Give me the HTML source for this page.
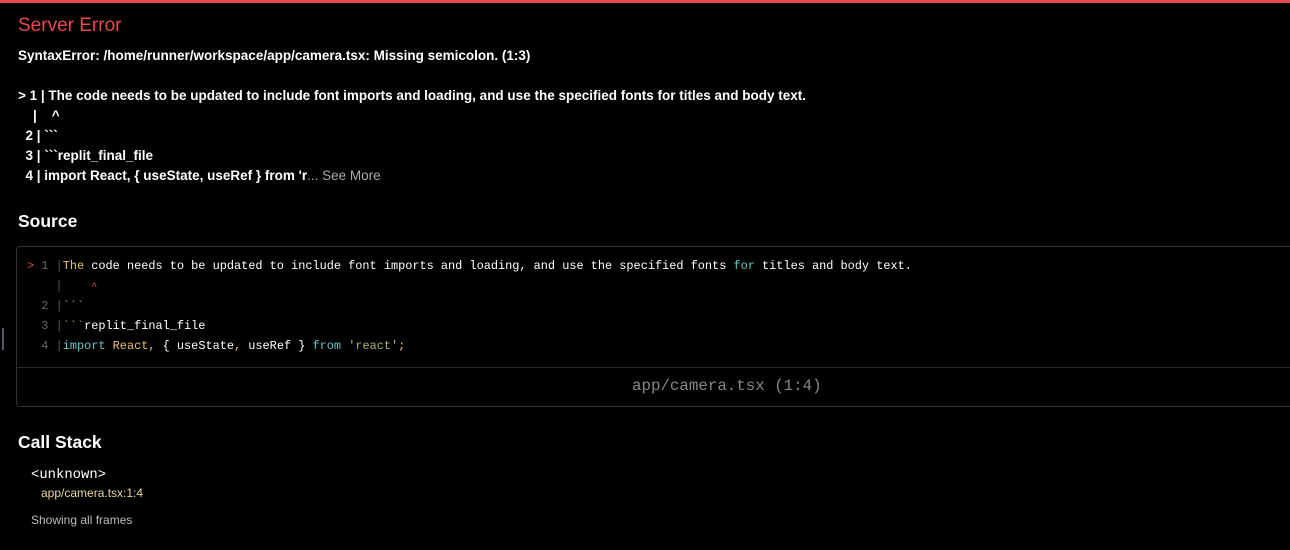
<!DOCTYPE html>
<html><head><style>
body{margin:0;background:#000;width:1290px;height:550px;overflow:hidden;font-family:"Liberation Sans",sans-serif;color:#fff;position:relative}
.bar{position:absolute;left:0;top:0;width:1290px;height:3px;background:#e5484d}
.a{position:absolute;white-space:pre}
h1{position:absolute;left:18px;top:15px;margin:0;font-size:19px;font-weight:normal;color:#e5484d}
.b{font-weight:bold;font-size:13.5px}
h2{position:absolute;left:18px;margin:0;font-size:17.5px;font-weight:bold}
.m{font-family:"Liberation Mono",monospace;font-size:11.9px}
.box{position:absolute;left:16px;top:246px;width:1290px;height:159px;border:1px solid #333;border-radius:4px}
.sep{position:absolute;left:17px;top:367px;width:1290px;height:1px;background:#2a2a2a}
.ln{color:#666}.g{color:#555}
.y{color:#e8c070}.c{color:#6cc6c6}.s{color:#b0b070}.r{color:#e5484d}
</style></head><body>
<div class="bar"></div>
<h1>Server Error</h1>
<div class="a b" style="left:18px;top:48px">SyntaxError: /home/runner/workspace/app/camera.tsx: Missing semicolon. (1:3)</div>
<div class="a b" style="left:18px;top:88px">&gt; 1 | The code needs to be updated to include font imports and loading, and use the specified fonts for titles and body text.</div>
<div class="a b" style="left:18px;top:108px">    |    ^</div>
<div class="a b" style="left:18px;top:128px">  2 | &#96;&#96;&#96;</div>
<div class="a b" style="left:18px;top:148px">  3 | &#96;&#96;&#96;replit_final_file</div>
<div class="a b" style="left:18px;top:168px">  4 | import React, { useState, useRef } from 'r<span style="font-weight:normal;color:#aaa">... See More</span></div>
<h2 style="top:211px">Source</h2>
<div class="box"></div>
<div class="sep"></div>
<div style="position:absolute;left:2px;top:328px;width:2px;height:22px;background:#556"></div>
<div class="a m" style="left:27px;top:259px"><span class="r">&gt;</span> <span class="ln">1</span> <span class="g">|</span><span class="y">The</span> code needs to be updated to include font imports and loading, and use the specified fonts <span class="c">for</span> titles and body text.</div>
<div class="a m" style="left:27px;top:279px">    <span class="g">|</span>    <span class="r" style="font-size:10px">^</span></div>
<div class="a m" style="left:27px;top:299px">  <span class="ln">2</span> <span class="g">|</span><span class="s">&#96;&#96;&#96;</span></div>
<div class="a m" style="left:27px;top:319px">  <span class="ln">3</span> <span class="g">|</span><span class="s">&#96;&#96;&#96;</span>replit_final_file</div>
<div class="a m" style="left:27px;top:339px">  <span class="ln">4</span> <span class="g">|</span><span class="c">import</span> <span class="y">React,</span> { useState<span class="y">,</span> useRef } <span class="c">from</span> <span class="s">'react'</span><span class="y">;</span></div>
<div class="a m" style="left:632px;top:377px;font-size:15.8px;color:#888">app/camera.tsx (1:4)</div>
<h2 style="top:432px">Call Stack</h2>
<div class="a m" style="left:31px;top:467px;font-size:13.9px">&lt;unknown&gt;</div>
<div class="a" style="left:41px;top:486px;font-size:12px;color:#e8d8a0">app/camera.tsx:1:4</div>
<div class="a" style="left:31px;top:513px;font-size:12px;color:#bbb">Showing all frames</div>
</body></html>
